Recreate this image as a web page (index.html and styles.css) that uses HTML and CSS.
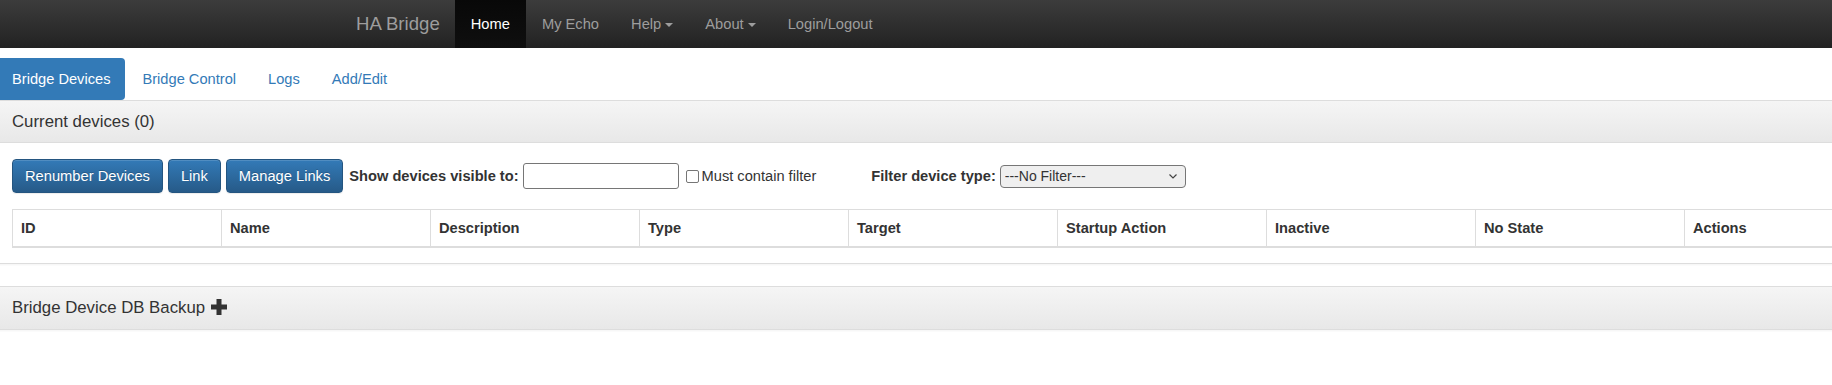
FILE: index.html
```html
<!DOCTYPE html>
<html lang="en">
<head>
    <meta charset="UTF-8">
    <meta name="viewport" content="width=device-width, initial-scale=1.0">
    <title>HA Bridge</title>
    <link rel="stylesheet" href="styles.css">
</head>
<body>
    <nav class="navbar">
        <div class="navbar-inner">
            <a class="brand" href="#">HA Bridge</a>
            <ul class="nav-links">
                <li class="active"><a href="#">Home</a></li>
                <li><a href="#">My Echo</a></li>
                <li><a href="#">Help<span class="caret"></span></a></li>
                <li><a href="#">About<span class="caret"></span></a></li>
                <li><a href="#">Login/Logout</a></li>
            </ul>
        </div>
    </nav>

    <div class="page">
        <ul class="tabs">
            <li class="active"><a href="#">Bridge Devices</a></li>
            <li><a href="#">Bridge Control</a></li>
            <li><a href="#">Logs</a></li>
            <li><a href="#">Add/Edit</a></li>
        </ul>

        <div class="panel">
            <div class="panel-heading">Current devices (0)</div>
            <div class="panel-body">
                <div class="toolbar">
                    <button class="btn">Renumber Devices</button>
                    <button class="btn">Link</button>
                    <button class="btn">Manage Links</button>
                    <label class="field-label">Show devices visible to:</label>
                    <input class="text-input" type="text">
                    <input class="check" type="checkbox">
                    <span class="check-label">Must contain filter</span>
                    <label class="field-label type-label">Filter device type:</label>
                    <span class="select-wrap">
                        <select class="select">
                            <option>---No Filter---</option>
                        </select>
                        <svg class="chevron" width="8" height="5" viewBox="0 0 8 5"><path d="M0.5 0.5 L4 4 L7.5 0.5" fill="none" stroke="#444" stroke-width="1.2"/></svg>
                    </span>
                </div>
                <table class="devices">
                    <thead>
                        <tr>
                            <th>ID</th>
                            <th>Name</th>
                            <th>Description</th>
                            <th>Type</th>
                            <th>Target</th>
                            <th>Startup Action</th>
                            <th>Inactive</th>
                            <th>No State</th>
                            <th>Actions</th>
                        </tr>
                    </thead>
                    <tbody></tbody>
                </table>
            </div>
        </div>

        <div class="panel backup">
            <div class="panel-heading">Bridge Device DB Backup
                <svg class="plus" width="16" height="16" viewBox="0 0 16 16"><rect x="0" y="5.5" width="16" height="5" fill="#333"/><rect x="5.5" y="0" width="5" height="16" fill="#333"/></svg>
            </div>
        </div>
    </div>
</body>
</html>
```

FILE: styles.css
```css
body {
    margin: 0;
    font-family: "Liberation Sans", Arial, sans-serif;
    font-size: 14.65px;
    line-height: 20px;
    color: #333;
    background-color: #fff;
    overflow-x: hidden;
}
a {
    text-decoration: none;
}
.navbar {
    height: 48px;
    background: linear-gradient(to bottom, #3c3c3c 0, #222 100%);
}
.navbar-inner {
    width: 1150px;
    margin: 0 auto;
    display: flex;
}
.brand {
    padding: 14px 15px;
    font-size: 18.6px;
    line-height: 20px;
    color: #9d9d9d;
}
.nav-links {
    display: flex;
    list-style: none;
    margin: 0;
    padding: 0;
}
.nav-links a {
    display: block;
    padding: 14px 16px;
    font-size: 14.7px;
    line-height: 20px;
    color: #9d9d9d;
}
.nav-links .active a {
    color: #fff;
    background: linear-gradient(to bottom, #080808 0, #0f0f0f 100%);
}
.caret {
    display: inline-block;
    width: 0;
    height: 0;
    margin-left: 4px;
    vertical-align: middle;
    border-top: 4px solid;
    border-left: 4px solid transparent;
    border-right: 4px solid transparent;
}
.page {
    margin: 10px -4px 0 -3px;
}
.tabs {
    display: flex;
    list-style: none;
    margin: 0;
    padding: 0;
}
.tabs li {
    margin-right: 2px;
}
.tabs a {
    display: block;
    padding: 10px 15px;
    line-height: 22px;
    color: #337ab7;
    border-radius: 4px;
}
.tabs .active a {
    background-color: #337ab7;
    color: #fff;
}
.panel {
    border: 1px solid #ddd;
    margin-bottom: 22px;
    background-color: #fff;
    box-shadow: 0 1px 2px rgba(0, 0, 0, .05);
}
.panel-heading {
    padding: 10px 15px 10px 14px;
    font-size: 16.8px;
    line-height: 21px;
    color: #333;
    background: linear-gradient(to bottom, #f5f5f5 0, #e8e8e8 100%);
    border-bottom: 1px solid #ddd;
}
.backup .panel-heading {
    border-bottom: none;
    line-height: 22px;
}
.plus {
    vertical-align: -2px;
    margin-left: 1px;
}
.panel-body {
    padding: 16px 15px 15px 14px;
}
.toolbar {
    display: flex;
    align-items: center;
}
.btn {
    display: inline-block;
    margin: 0 5px 0 0;
    padding: 6px 12px;
    font-family: inherit;
    font-size: 14.7px;
    line-height: 20px;
    color: #fff;
    border: 1px solid #245580;
    border-radius: 4px;
    background: linear-gradient(to bottom, #337ab7 0, #265a88 100%);
    text-shadow: 0 -1px 0 rgba(0, 0, 0, .2);
    box-shadow: inset 0 1px 0 rgba(255, 255, 255, .15), 0 1px 1px rgba(0, 0, 0, .075);
    cursor: pointer;
}
.field-label {
    font-weight: bold;
    margin: 0 4px 0 1px;
}
.type-label {
    margin-left: 55px;
}
.text-input {
    box-sizing: border-box;
    width: 156px;
    height: 26px;
    margin: 0;
    border: 1px solid #767676;
    border-radius: 3px;
}
.check {
    appearance: none;
    box-sizing: border-box;
    width: 13px;
    height: 13px;
    margin: 0 3px 0 7px;
    border: 1px solid #767676;
    border-radius: 2px;
    background-color: #fff;
}
.check-label {
    color: #333;
}
.select-wrap {
    position: relative;
    display: inline-block;
}
.select {
    appearance: none;
    box-sizing: border-box;
    width: 186px;
    height: 23px;
    padding: 0 4px;
    font-family: "Liberation Sans", Arial, sans-serif;
    font-size: 14px;
    color: #333;
    border: 1px solid #767676;
    border-radius: 4px;
    background-color: #efefef;
    display: block;
}
.chevron {
    position: absolute;
    right: 9px;
    top: 9px;
}
.devices {
    margin-top: 16px;
    width: 1882px;
    table-layout: fixed;
    border-collapse: collapse;
    border: 1px solid #ddd;
}
.devices th {
    padding: 8px;
    text-align: left;
    font-weight: bold;
    line-height: 20px;
    border: 1px solid #ddd;
    border-bottom: 2px solid #ddd;
}
```
